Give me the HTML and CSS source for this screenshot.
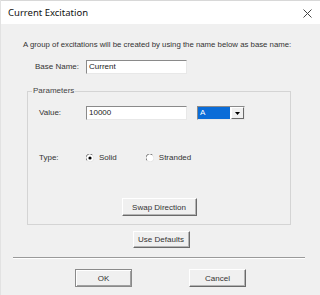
FILE: index.html
```html
<!DOCTYPE html>
<html>
<head>
<meta charset="utf-8">
<link rel="stylesheet" href="styles.css">
</head>
<body>
<div class="dialog">
  <div class="titlebar">
    <span class="title">Current Excitation</span>
    <svg class="close" width="9" height="9" viewBox="0 0 9 9"><path d="M0.5 0.5 L8.5 8.5 M8.5 0.5 L0.5 8.5" stroke="#444" stroke-width="1" fill="none"/></svg>
  </div>
  <div class="body">
    <div class="intro">A group of excitations will be created by using the name below as base name:</div>
    <div class="row base">
      <span class="label lbl-base">Base Name:</span>
      <div class="input in-base">Current</div>
    </div>
    <fieldset class="group">
      <legend>Parameters</legend>
      <div class="row value">
        <span class="label lbl-val">Value:</span>
        <div class="input in-val">10000</div>
        <div class="combo">
          <div class="combo-sel">A</div>
          <div class="combo-btn"><svg width="5" height="3" viewBox="0 0 5 3"><path d="M0 0 H5 L2.5 3 Z" fill="#000"/></svg></div>
        </div>
      </div>
      <div class="row type">
        <span class="label lbl-val">Type:</span>
        <span class="radio">
          <svg width="8" height="8" viewBox="0 0 8 8"><circle cx="4" cy="4" r="3.5" fill="#fff"/><path d="M1 6.5 A3.5 3.5 0 0 1 6.5 1" stroke="#808080" stroke-width="1" fill="none"/><path d="M6.8 1.5 A3.5 3.5 0 0 1 1.5 6.8" stroke="#e6e6e6" stroke-width="1" fill="none"/><circle cx="4" cy="4" r="1.6" fill="#000"/></svg>
          Solid
        </span>
        <span class="radio r2">
          <svg width="8" height="8" viewBox="0 0 8 8"><circle cx="4" cy="4" r="3.5" fill="#fff"/><path d="M1 6.5 A3.5 3.5 0 0 1 6.5 1" stroke="#808080" stroke-width="1" fill="none"/><path d="M6.8 1.5 A3.5 3.5 0 0 1 1.5 6.8" stroke="#e6e6e6" stroke-width="1" fill="none"/></svg>
          Stranded
        </span>
      </div>
      <div class="center"><button class="btn swap">Swap Direction</button></div>
    </fieldset>
    <div class="center defaults"><button class="btn usedef">Use Defaults</button></div>
    <div class="sep"></div>
    <div class="row actions">
      <button class="btn ok">OK</button>
      <button class="btn cancel">Cancel</button>
    </div>
  </div>
</div>
</body>
</html>
```
FILE: styles.css
```css
html, body {
  margin: 0;
  padding: 0;
}
body {
  width: 320px;
  height: 295px;
  overflow: hidden;
  background: #f0f0f0;
  font-family: "Liberation Sans", Arial, sans-serif;
  font-size: 8px;
  color: #333;
}
.dialog {
  height: 295px;
  border-left: 1px solid #e2e2e2;
  box-sizing: border-box;
}
.titlebar {
  height: 24px;
  background: #fff;
  display: flex;
  align-items: center;
  justify-content: space-between;
  padding: 0 8px 0 7px;
  border-top: 1px solid #d8d8d8;
  box-sizing: border-box;
}
.title {
  font-family: "Noto Sans", "Open Sans", sans-serif;
  font-size: 9.5px;
  color: #111;
}
.close { display: block; margin-top: 1px; }
.body {
  padding-top: 16px;
}
.intro {
  padding-left: 22px;
  line-height: 10px;
  font-size: 7.8px;
}
.row {
  display: flex;
  align-items: center;
}
.base {
  margin-top: 10px;
  padding-left: 34px;
}
.label { line-height: 10px; }
.lbl-base { width: 51px; }
.input {
  background: #fff;
  border-top: 1px solid #8a8a8a;
  border-left: 1px solid #8a8a8a;
  border-right: 1px solid #e8e8e8;
  border-bottom: 1px solid #e8e8e8;
  box-sizing: border-box;
  height: 14px;
  line-height: 12px;
  padding-left: 2px;
  color: #222;
}
.in-base { width: 101px; }
.group {
  margin: 12px 0 0 26px;
  width: 264px;
  box-sizing: border-box;
  border: 1px solid #d4d4d4;
  padding: 10px 0 8px 0;
}
.group legend {
  margin-left: 4px;
  padding: 0 1px;
  line-height: 10px;
  color: #444;
}
.value { padding-left: 11px; }
.lbl-val { width: 47px; }
.in-val { width: 101px; height: 14px; }
.combo {
  margin-left: 10px;
  width: 48px;
  height: 14px;
  box-sizing: border-box;
  border-top: 1px solid #8a8a8a;
  border-left: 1px solid #8a8a8a;
  border-right: 1px solid #e8e8e8;
  border-bottom: 1px solid #e8e8e8;
  background: #fff;
  display: flex;
}
.combo-sel {
  flex: 1;
  background: #0a6cd8;
  color: #fff;
  line-height: 12px;
  padding-left: 2px;
  margin: 0 1px 0 0;
}
.combo-btn {
  width: 13px;
  background: #f0f0f0;
  box-sizing: border-box;
  border-right: 1px solid #6a6a6a;
  border-bottom: 1px solid #6a6a6a;
  border-top: 1px solid #fff;
  border-left: 1px solid #fff;
  display: flex;
  align-items: center;
  justify-content: center;
}
.type {
  margin-top: 32px;
  padding-left: 11px;
  height: 12px;
}
.radio {
  display: flex;
  align-items: center;
  gap: 5px;
  line-height: 10px;
}
.radio svg { display: block; }
.r2 { margin-left: 29px; }
.center {
  display: flex;
  justify-content: center;
}
.group .center { margin-top: 34px; }
.btn {
  font-family: "Liberation Sans", Arial, sans-serif;
  font-size: 8px;
  color: #333;
  background: #f0f0f0;
  box-sizing: border-box;
  padding: 0;
  margin: 0;
  border-top: 1px solid #fff;
  border-left: 1px solid #fff;
  border-right: 1px solid #6a6a6a;
  border-bottom: 1px solid #6a6a6a;
  box-shadow: inset -1px -1px 0 #b4b4b4;
  height: 18px;
}
.swap { width: 75px; }
.defaults { margin-top: 6px; padding-left: 1px; }
.usedef { width: 57px; height: 17px; }
.sep {
  margin: 9px 0 0 12px;
  width: 292px;
  height: 1px;
  background: #9a9a9a;
  border-bottom: 1px solid #fff;
}
.actions {
  margin-top: 10px;
  padding-left: 74px;
  gap: 57px;
}
.ok {
  width: 57px;
  border: 1px solid #8a8a8a;
  box-shadow: inset 1px 1px 0 #fff, inset -1px -1px 0 #a0a0a0;
}
.cancel { width: 57px; }
```
